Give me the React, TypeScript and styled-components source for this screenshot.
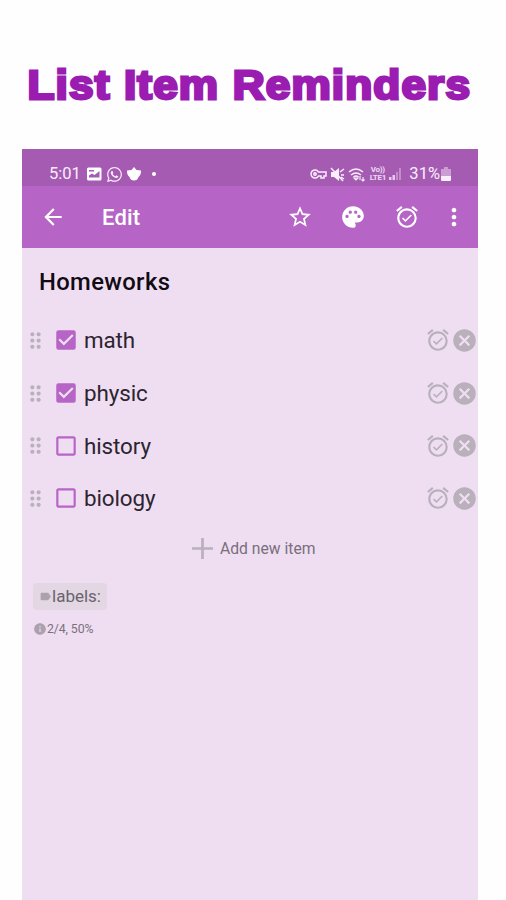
import React from "react";
import styled, { createGlobalStyle } from "styled-components";
import {
  MdArrowBack, MdStarBorder, MdPalette, MdAlarmOn, MdMoreVert, MdCheckBox,
  MdCheckBoxOutlineBlank, MdCancel, MdDragIndicator, MdLabel, MdInfo,
} from "react-icons/md";
import { FaWhatsapp } from "react-icons/fa";

const GlobalStyle = createGlobalStyle`
  * { box-sizing: border-box; }
  body { margin: 0; background: #fefefe; font-family: Roboto, sans-serif; overflow: hidden; }
  svg { display: block; flex: none; }
`;

const Page = styled.main`
  width: 506px;
  height: 900px;
  padding: 0 28px 0 22px;
  display: flex;
  flex-direction: column;
  overflow: hidden;
`;

const Headline = styled.h1`
  margin: 0;
  height: 149px;
  padding: 60px 0 0 5px;
  font: 700 40.5px/50px "Liberation Sans", sans-serif;
  letter-spacing: 1.05px;
  white-space: nowrap;
  color: #9a1cb0;
  -webkit-text-stroke: 2.8px #9a1cb0;
  paint-order: stroke fill;
  transform: scaleX(1.09);
  transform-origin: 0 0;
`;

const Screen = styled.section`
  flex: 1;
  display: flex;
  flex-direction: column;
  background: #efdef1;
`;

const StatusBar = styled.div`
  height: 37px;
  padding: 12px 27px 0 27px;
  display: flex;
  justify-content: space-between;
  background: #a65bb3;
  color: #f9effb;
  font-size: 16.5px;
  line-height: 26px;
`;

const StatusGroup = styled.div<{ $gap: number }>`
  height: 26px;
  display: flex;
  align-items: center;
  gap: ${(p) => p.$gap}px;
`;

const Clock = styled.span`
  width: 32px;
  margin-right: 2px;
`;

const Dot = styled.span`
  width: 4px;
  height: 4px;
  margin-left: 7px;
  border-radius: 50%;
  background: #fff;
`;

const Lte = styled.span`
  width: 17px;
  display: flex;
  flex-direction: column;
  align-items: center;
  font: 700 8px/8px Roboto, sans-serif;
  letter-spacing: -0.3px;
  opacity: 0.85;
`;

const Percent = styled.span`
  margin-left: 4px;
  margin-right: -2px;
`;

const AppBar = styled.header`
  height: 62px;
  padding: 0 10px 0 18px;
  display: flex;
  align-items: center;
  background: #b664c6;
  color: #fff;
`;

const BarTitle = styled.h2`
  flex: 1;
  margin: 0 0 0 36px;
  font-size: 22px;
  font-weight: 500;
  letter-spacing: 0.2px;
`;

const Actions = styled.div`
  display: flex;
  align-items: center;
  gap: 27.5px;
`;

const MoreSlot = styled.span`
  margin-left: -7px;
`;

const NoteTitle = styled.h3`
  margin: 0;
  height: 66px;
  padding: 20px 0 0 17px;
  font-size: 23.8px;
  line-height: 28px;
  font-weight: 500;
  letter-spacing: 0.35px;
  color: #110b13;
`;

const Row = styled.div`
  height: 52.7px;
  display: flex;
  align-items: center;
  color: #b9b0bc;
`;

const Handle = styled.span`
  width: 31px;
  padding-left: 1px;
`;

const Check = styled.span`
  width: 31px;
  color: #b664c6;
`;

const ItemText = styled.span`
  flex: 1;
  font-size: 22.4px;
  line-height: 28px;
  letter-spacing: -0.1px;
  color: #2c2430;
`;

const AddRow = styled.div`
  height: 48px;
  padding: 0 0 0 170px;
  display: flex;
  align-items: center;
  gap: 7px;
  color: #796f7d;
  font-size: 15.7px;
`;

const LabelChip = styled.div`
  width: 74px;
  height: 27px;
  margin: 10px 0 0 11px;
  padding-left: 6px;
  display: flex;
  align-items: center;
  border-radius: 4px;
  background: #e2d7e3;
  color: #6a626d;
  font-size: 17px;
`;

const Stats = styled.div`
  margin: 11px 0 0 11px;
  display: flex;
  align-items: center;
  height: 16px;
  color: #7b717f;
  font-size: 12.3px;
  letter-spacing: -0.1px;
`;

const Muted = styled.span`
  color: #aba2ae;
`;

const items = [
  { text: "math", done: true },
  { text: "physic", done: true },
  { text: "history", done: false },
  { text: "biology", done: false },
];

const Picture = () => (
  <svg width="17" height="14" viewBox="0 0 17 14">
    <rect x="1" y="0.5" width="14.500" height="13" rx="1.500" fill="#fff" />
    <path d="M3 10.500V8.500l3-2 2.500 1.500 5-4v6.500zM3 3h5v1.500H3z" fill="#a65bb3" />
  </svg>
);

const Pot = () => (
  <svg width="16" height="16" viewBox="0 0 16 16" fill="#fff">
    <path d="M8 1l2.500 3 4.500.5q.300 4-2.500 6.500Q11.500 14.500 8 14.500T3.500 11Q.7 8.500 1 4.500L5.500 4z" />
  </svg>
);

const Key = () => (
  <svg width="17" height="12" viewBox="0 0 17 12" fill="none" stroke="currentColor" strokeWidth="1.5">
    <path d="M8.500 4A4 4 0 1 0 8.500 8H11v2h3V8h2V4z" />
    <circle cx="5" cy="6" r="1.200" />
  </svg>
);

const Mute = () => (
  <svg width="15" height="15" viewBox="0 0 15 15" fill="none" stroke="currentColor" strokeWidth="1.500">
    <path d="M1 5h3l5-4v13L4 10H1z" fill="currentColor" stroke="none" />
    <path d="M1 1l12 13M10 5l4-3M11 8h3M11 10l3 2" />
  </svg>
);

const Wifi = () => (
  <svg width="18" height="15" viewBox="0 0 18 15" fill="none" stroke="currentColor" strokeWidth="1.500">
    <path d="M1 5Q8 -1 15 5M3 8q5-4 10 0M5.500 10q2.500-2 5 0" />
    <path d="M8 13l-2-2h4zM12 13V9M15 10v4M13.500 12.500 15 14l1.500-1.500" strokeWidth="1.100" />
  </svg>
);

const Signal = () => (
  <svg width="13" height="12" viewBox="0 0 13 12" fill="currentColor">
    <path d="M0 9h2.500v3H0zM3.500 7H6v5H3.500z" opacity=".75" />
    <path d="M7 4h2v8H7zM10 0h2v12h-2z" opacity=".35" />
  </svg>
);

const Battery = () => (
  <svg width="10" height="14" viewBox="0 0 10 14" fill="currentColor">
    <path d="M3 0h4v2h3v7H0V2h3z" opacity=".45" />
    <path d="M0 9h10v4q0 1-1 1H1q-1 0-1-1z" />
  </svg>
);

const Plus = () => (
  <svg width="21" height="21" viewBox="0 0 21 21" stroke="#b9b0bc" strokeWidth="2.700">
    <path d="M10.500 0v21M0 10.500h21" />
  </svg>
);

export default function App() {
  return (
    <>
      <GlobalStyle />
      <Page>
        <Headline>List Item Reminders</Headline>
        <Screen>
          <StatusBar>
            <StatusGroup $gap={3}>
              <Clock>5:01</Clock>
              <Picture />
              <FaWhatsapp size={17} />
              <Pot />
              <Dot />
            </StatusGroup>
            <StatusGroup $gap={3}>
              <Key />
              <Mute />
              <Wifi />
              <Lte><span>Vo))</span><span>LTE1</span></Lte>
              <Signal />
              <Percent>31%</Percent>
              <Battery />
            </StatusGroup>
          </StatusBar>
          <AppBar>
            <MdArrowBack size={26} />
            <BarTitle>Edit</BarTitle>
            <Actions>
              <MdStarBorder size={26} />
              <MdPalette size={26} />
              <MdAlarmOn size={26} />
              <MoreSlot><MdMoreVert size={28} /></MoreSlot>
            </Actions>
          </AppBar>
          <NoteTitle>Homeworks</NoteTitle>
          {items.map((item) => (
            <Row key={item.text}>
              <Handle><MdDragIndicator size={25} /></Handle>
              <Check>
                {item.done ? <MdCheckBox size={26} /> : <MdCheckBoxOutlineBlank size={26} />}
              </Check>
              <ItemText>{item.text}</ItemText>
              <MdAlarmOn size={26} />
              <MdCancel size={27} />
            </Row>
          ))}
          <AddRow><Plus />Add new item</AddRow>
          <LabelChip><Muted><MdLabel size={13} /></Muted>labels:</LabelChip>
          <Stats><Muted><MdInfo size={14} /></Muted>2/4, 50%</Stats>
        </Screen>
      </Page>
    </>
  );
}
